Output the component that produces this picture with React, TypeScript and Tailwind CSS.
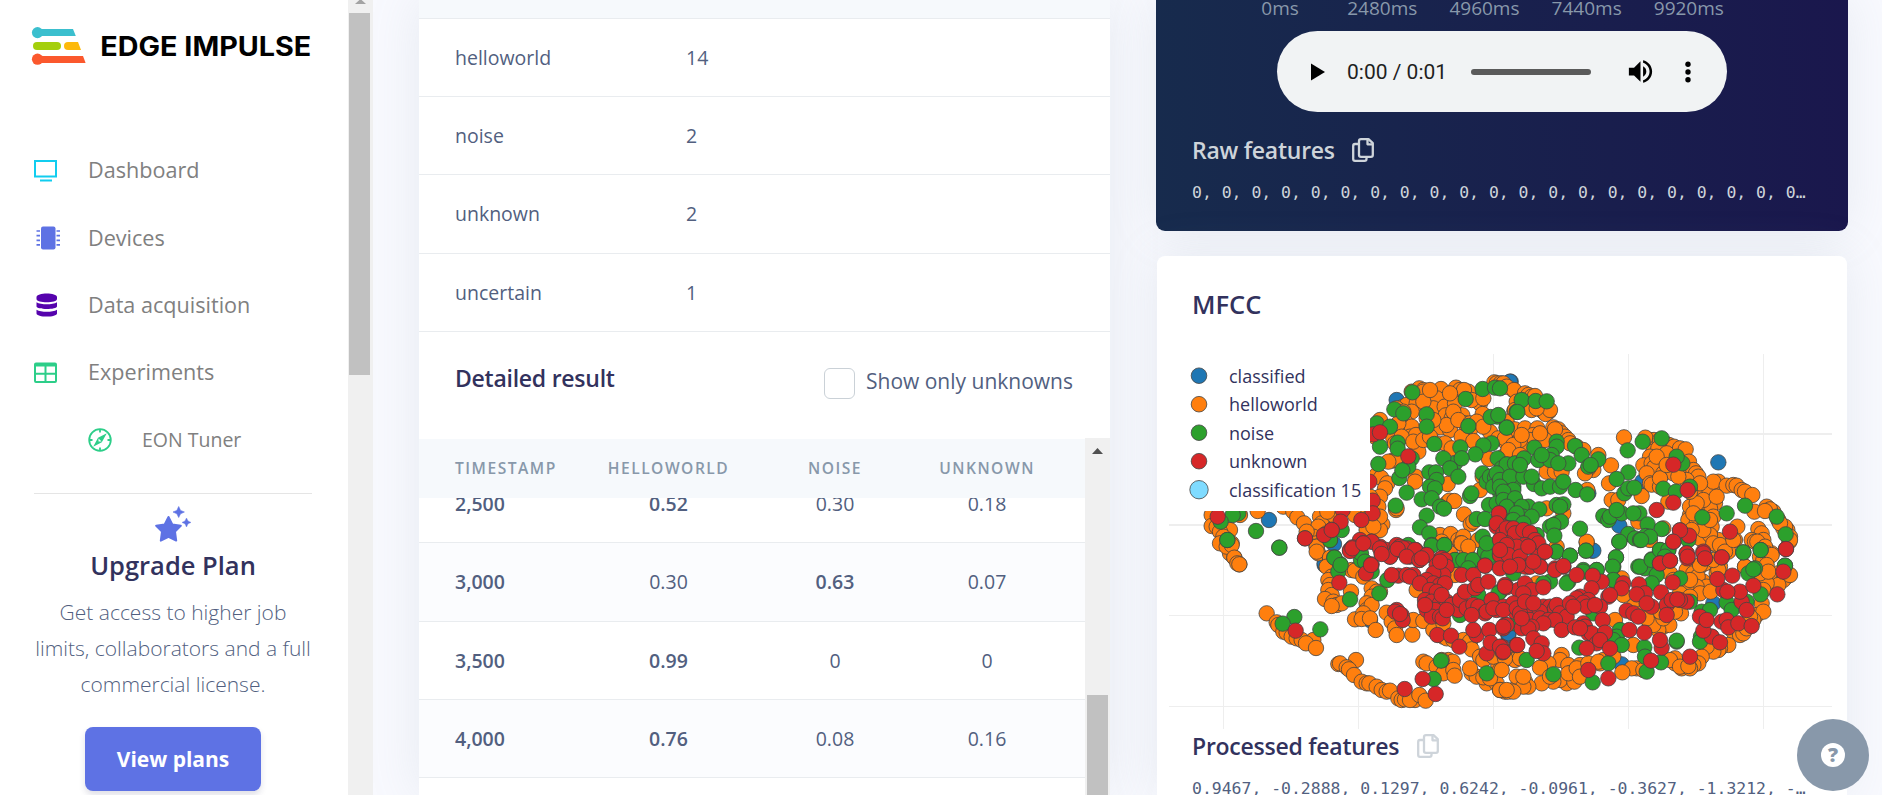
import React from "react";

type Trace = { color: string; tiles: string[] };

// Marker positions, grouped by trace. Each trace has four tiles (top-left,
// top-right, bottom-left, bottom-right) measured at three units per pixel.
const TILE_ORIGINS = [
  [1150, 340],
  [1500, 340],
  [1150, 540],
  [1500, 540],
];

const TRACES: Trace[] = [
  {
    color: "#1f77b4",
    tiles: [
      "357,540 740,180 1082,125 552,612 524,675",
      "30,125 655,367 427,425 358,557 275,632 265,460",
      "660,240 1075,285 524,70",
      "280,32 640,190 365,373 25,280",
    ],
  },
  {
    color: "#ff7f0e",
    tiles: [
      "785,155 808,145 820,150 830,170 873,147 918,143 930,150 955,155 942,150 760,200 770,195 800,190 785,215 860,175 850,205 884,200 915,190 887,226 937,226 905,235 990,190 998,222 1033,127 1040,130 1060,140 1052,130 1090,150 1093,213 740,205 690,240 765,245 770,265 785,260 780,290 798,285 850,260 873,262 900,270 890,255 960,270 1020,276 935,290 970,303 1080,280 1070,245 860,310 885,310 905,325 800,315 805,335 730,295 735,310 728,362 740,360 715,365 675,290 1017,357 1090,340 1060,350 1080,325 797,410 795,425 893,432 998,410 990,450 680,405 693,413 712,430 705,445 690,470 685,500 738,510 740,505 890,490 898,482 913,483 942,523 962,552 970,545 697,553 650,570 690,570 615,525 870,585 902,582 875,605 925,600 940,590 932,610 985,600 950,635 900,640 185,525 270,525 323,513 400,500 430,515 442,532 462,550 185,558 200,560 240,570 210,575 220,590 245,610 232,620 240,640 253,653 268,673 530,513 510,530 515,550 550,525 532,515 505,560 490,590 500,610 505,640 500,620 470,575 530,580 540,655 655,510 690,530 820,155 760,215 910,215 945,250 820,185 925,240 660,470 665,520 670,560 830,235 850,240 745,250 900,160 965,180 1000,175 960,250 980,245 1000,260 1045,295 755,290 790,305 820,300 840,290 840,150",
      "10,130 20,140 42,150 75,160 85,165 95,170 105,168 50,185 45,210 95,210 147,215 130,215 137,222 45,268 75,265 112,265 145,290 160,262 175,268 185,280 195,290 205,300 210,310 165,268 100,285 135,300 90,300 20,310 45,340 70,325 230,320 250,330 295,345 333,376 140,395 165,395 185,395 280,390 265,385 255,400 262,450 372,292 450,300 462,300 436,293 480,300 495,310 507,315 460,335 475,325 450,350 510,350 522,320 540,325 557,328 567,365 430,376 455,370 465,400 463,382 440,400 490,400 525,390 545,385 580,390 588,400 595,410 560,420 450,430 327,430 425,468 455,434 480,440 505,485 335,480 355,480 590,455 585,470 610,450 627,445 655,425 640,425 680,437 700,435 710,437 725,450 735,455 757,465 645,490 630,505 590,510 570,525 600,530 640,530 565,540 590,550 615,550 635,560 800,500 820,515 810,508 763,515 795,513 835,540 850,565 862,570 855,560 870,590 868,605 775,567 785,580 755,600 765,605 790,600 772,605 712,560 705,600 655,600 600,595 650,615 670,632 685,635 780,650 800,630 815,640 800,660 260,607 170,620 190,520 140,505 415,545 490,565 450,600 640,670 660,680 735,680 600,680 615,670 500,340 520,400 610,480 570,500 650,470 590,490 630,585 610,570 575,570 480,415 15,295 60,300 40,315 150,210 110,205 65,285 120,280 25,330 60,345 470,350 500,375 535,410 600,430 570,455 630,540 580,520 840,550 870,600",
      "210,10 230,20 245,15 253,53 262,70 268,73 500,20 500,35 540,53 530,80 545,110 535,120 540,135 535,150 545,165 525,177 550,185 560,195 575,190 545,198 605,90 615,92 640,110 603,155 665,145 690,155 680,155 665,170 650,190 650,210 665,195 615,238 640,220 635,237 660,235 677,270 710,218 725,245 735,265 740,285 787,284 790,240 820,243 350,220 380,247 385,255 400,275 410,278 425,290 440,295 455,300 490,300 468,310 498,324 565,372 570,370 618,360 590,382 597,388 612,405 635,425 650,430 658,430 680,440 695,450 710,455 720,452 745,475 755,480 765,478 795,480 780,480 808,465 827,482 820,365 830,370 860,380 880,400 895,360 908,365 875,360 910,390 914,407 850,270 870,285 880,290 890,295 880,250 910,300 940,300 960,305 965,328 965,400 980,410 960,385 990,350 1000,360 1045,375 1050,390 1010,430 1000,412 1040,430 1020,415 1065,455 1050,450 1090,450 1075,455 1100,410 1085,355 1100,355 900,100 915,105 935,10 955,20 800,150 1060,360 1030,350 860,200 870,215",
      "260,5 365,115 110,130 370,165 430,190 400,200 345,240 425,220 470,240 450,250 490,260 508,255 543,220 475,270 460,255 400,315 510,100 520,120 560,90 580,100 540,130 610,125 593,110 620,140 590,140 560,150 600,160 632,155 650,100 655,90 640,60 640,10 660,15 675,35 700,0 735,80 795,20 800,40 790,60 815,45 835,100 815,110 860,110 850,120 835,135 800,130 855,95 790,150 785,190 770,225 790,215 760,240 750,230 700,275 720,285 730,280 740,265 685,315 660,325 655,330 640,335 635,290 620,320 605,350 595,370 580,375 560,375 545,385 525,370 525,355 510,360 570,385 540,380 565,378 410,385 395,385 430,390 367,397 185,345 180,360 205,375 210,400 200,430 180,420 160,425 223,425 205,400 240,375 230,385 265,370 300,370 310,360 295,365 125,430 145,370 120,383 75,425 85,440 70,440 70,410 40,455 0,450 20,450 45,360 15,355 60,355 5,390 150,410 240,410 340,350 490,235 525,215 480,215 440,235 570,120 540,160 570,170 780,100 800,75 805,95 870,105 340,120 600,75",
    ],
  },
  {
    color: "#2ca02c",
    tiles: [
      "787,157 998,147 1035,143 947,177 733,208 760,220 830,223 680,250 720,260 830,260 1100,215 1042,230 1022,231 955,258 1070,262 743,308 743,326 690,320 853,312 931,322 1025,310 1000,316 976,343 685,372 785,355 775,380 748,414 757,391 915,370 935,355 880,355 900,385 925,410 1043,355 1055,385 1072,374 838,397 858,397 860,420 840,440 855,445 770,458 815,478 845,475 870,500 882,506 737,497 830,527 810,562 838,580 845,615 883,615 998,400 1010,425 1020,410 1035,413 960,468 964,460 1017,495 1070,478 1050,457 1090,410 1095,480 980,537 1005,537 998,590 1005,635 318,573 388,623 265,520 248,525 212,545 232,600 575,570 540,600 553,652 570,672 633,660 775,615 915,660 940,665 965,665 1000,650 1050,600 1080,520 1060,500 1090,510 1040,490 1070,440 1090,440 1030,440 1100,390",
      "65,180 107,183 140,184 52,216 20,263 103,323 170,305 170,320 225,318 245,345 295,358 265,380 272,375 20,373 45,370 72,355 115,360 155,345 150,360 205,370 175,370 -5,225 0,145 -10,400 0,420 30,410 70,410 102,432 125,445 150,440 180,440 190,425 227,450 262,463 0,440 40,450 10,455 10,480 45,475 35,510 85,500 65,500 118,508 70,530 95,530 20,500 50,520 170,495 190,493 180,500 40,540 70,550 150,560 170,550 183,545 160,555 163,587 110,585 240,566 168,635 210,647 258,632 383,331 428,305 485,295 385,397 350,417 373,460 385,445 403,443 547,370 530,350 490,446 528,455 570,440 735,497 680,520 607,532 830,530 310,528 325,540 330,530 365,520 350,510 418,520 400,520 443,553 485,567 358,605 385,582 405,595 420,600 437,588 450,590 565,600 348,652 340,680 415,680 480,630 505,630 455,658 857,583 730,637 782,630 855,677 765,685 290,690 250,690 95,410 125,345 60,375",
      "388,23 232,0 433,231 398,251 511,268 565,95 553,53 572,75 540,0 633,40 645,65 665,95 600,178 688,160 712,120 845,17 883,15 915,60 940,60 968,60 955,85 1005,35 1015,50 1050,80 1050,155 985,165 930,225 873,362 851,417 1010,400 1090,80 1010,10 1090,60",
      "168,35 210,47 258,32 348,52 338,80 250,95 290,90 205,125 200,130 150,125 130,130 340,120 435,85 420,80 455,60 480,30 505,30 470,105 455,130 495,50 540,115 358,5 423,0 730,37 782,30 745,100 760,88 855,77 782,163 680,187 740,185 695,210 605,215 630,210 530,305 530,302 603,290 600,305 570,185 360,270 350,290 340,300 365,315 433,322 435,350 440,395 483,367 325,370 238,323 80,360 160,403 278,427 45,250 280,220 -5,160 50,30 40,100",
    ],
  },
  {
    color: "#d62728",
    tiles: [
      "670,283 690,277 775,349 658,425 668,482 668,520 578,510 572,545 545,570 522,585 545,570 634,540 465,595 203,530 630,600 640,610 665,605 600,630 607,622 1048,521 1040,560 1060,560 1075,565 1090,575 1062,580 690,620 710,630 740,615 750,620 770,625 797,630 745,630 695,640 720,650 780,650 825,645 808,660 870,660 875,655 665,673 1005,677 1050,645 1070,617 1100,640 1085,650",
      "520,374 563,450 520,488 470,510 540,571 520,605 567,587 540,571 690,575 858,627 610,635 560,640 615,655 562,655 665,652 480,670 510,662 -3,520 -10,550 10,580 20,565 40,565 45,580 70,570 90,578 105,600 115,610 75,615 85,620 20,610 0,600 25,645 0,640 135,635 115,650 60,660 190,680 165,685 120,680 85,680",
      "465,-5 568,128 437,272 600,33 607,25 648,100 663,75 665,5 640,10 690,25 720,50 695,42 760,25 795,30 743,27 770,50 830,45 808,60 815,55 875,55 885,60 860,75 870,90 890,80 880,105 850,100 745,107 725,105 770,105 790,105 780,110 830,120 850,130 870,135 885,130 810,130 840,150 860,155 825,180 845,185 870,190 890,185 875,165 830,210 855,210 845,230 870,230 878,235 905,195 925,210 930,180 945,155 935,105 970,105 975,145 985,135 1015,125 1005,77 1065,135 1070,142 950,205 970,195 985,200 1025,180 1005,220 1010,215 965,225 1040,210 1060,200 1100,205 740,210 735,215 755,225 758,240 750,222 862,285 903,287 928,320 980,285 970,270 1018,270 1065,255 1060,265 1010,340 1022,308 1055,320 1058,337 1100,315 818,417 764,447 857,462 1050,45 1080,50 1075,80 1070,20 1100,20 1030,205 1095,215 1105,150 870,65 825,195 890,210",
      "20,15 25,45 0,30 60,50 75,80 90,80 55,75 115,50 85,20 120,80 165,90 190,78 135,35 100,65 0,85 30,80 230,105 305,125 278,107 275,145 370,130 365,145 325,170 330,165 417,133 435,160 410,163 518,127 483,157 500,195 515,180 560,185 540,180 532,178 455,200 500,225 380,212 400,220 415,230 388,270 433,278 485,323 480,300 453,362 570,350 635,290 660,307 610,272 600,230 620,240 665,245 680,240 685,262 715,250 755,258 725,185 740,210 720,155 670,150 682,155 760,137 697,107 652,117 665,52 610,40 560,40 615,55 563,50 480,70 510,62 850,95 832,163 858,27 520,5 75,130 95,150 70,160 130,142 15,140 40,190 10,210 50,205 130,200 100,205 150,200 120,215 165,205 170,195 180,220 200,230 240,170 230,175 210,190 265,180 250,188 300,200 260,200 285,195 220,200 60,220 90,240 120,235 145,240 165,240 130,250 95,260 65,265 85,265 185,270 250,250 225,262 255,260 308,240 265,280 275,280 315,278 20,255 10,260 100,295 125,310 130,340 110,333 52,315 290,310 300,300 260,325 330,325 325,415 265,390 0,320 10,335 75,185 440,190 100,190 65,235 240,265",
    ],
  },
];

const LEGEND = [
  { label: "classified", color: "#1f77b4", r: 7.8 },
  { label: "helloworld", color: "#ff7f0e", r: 7.8 },
  { label: "noise", color: "#2ca02c", r: 7.8 },
  { label: "unknown", color: "#d62728", r: 7.8 },
  { label: "classification 15", color: "#7fdbff", r: 9.2 },
];

function Scatter() {
  return (
    <svg className="block h-[376px] w-[664px]" viewBox="1169 354 664 376">
      <g stroke="#eeeeee">
        {[1223.5, 1358.5, 1493.5, 1628.5, 1763.5].map((x) => (
          <path key={x} d={`M${x} 354V729`} />
        ))}
        <path d="M1169 434H1832M1169 525H1832" strokeWidth="2" />
        <path d="M1169 615.5H1832M1169 706.5H1832" />
      </g>
      {TRACES.map((trace) => (
        <g key={trace.color} fill={trace.color} stroke="#444444" strokeWidth="0.8">
          {trace.tiles.map((tile, t) =>
            tile.split(" ").map((pair, i) => {
              const [x, y] = pair.split(",").map(Number);
              const [ox, oy] = TILE_ORIGINS[t];
              return <circle key={`${t}-${i}`} cx={ox + x / 3} cy={oy + y / 3} r="7.7" />;
            }),
          )}
        </g>
      ))}
      <rect x="1169" y="354" width="201" height="157" fill="#ffffff" />
      {LEGEND.map((item, i) => (
        <g key={item.label}>
          <circle cx="1199" cy={375.7 + i * 28.5} r={item.r} fill={item.color} stroke="#444444" strokeWidth="0.8" />
          <text x="1229" y={382.8 + i * 28.5} className="fill-[#32325d] font-['Open_Sans',sans-serif] text-[18px]">
            {item.label}
          </text>
        </g>
      ))}
    </svg>
  );
}

function Logo() {
  return (
    <svg className="block h-[40px] w-[290px]" viewBox="30 26 290 40">
      <g fill="#3bbfce">
        <circle cx="37.5" cy="32.6" r="5.6" />
        <path d="M37 29H73L75.8 36H37Z" />
      </g>
      <rect x="33" y="42" width="28" height="8" rx="4" fill="#a4cf0c" />
      <path d="M68 42H78L81 50H68A4 4 0 0 1 68 42Z" fill="#fdb90b" />
      <g fill="#fb582d">
        <circle cx="37.5" cy="59.2" r="5.6" />
        <path d="M37 56H83L85.6 63H37Z" />
      </g>
      <text
        x="100.3"
        y="55.8"
        textLength="211"
        lengthAdjust="spacingAndGlyphs"
        className="fill-black font-['Inter',sans-serif] text-[26.5px] font-bold"
      >
        EDGE IMPULSE
      </text>
    </svg>
  );
}

const icon = "block h-6 w-6 shrink-0 overflow-visible";

function DashboardIcon() {
  return (
    <svg className={icon} viewBox="0 0 24 24" fill="none" stroke="#11cdef" strokeWidth="2">
      <rect x="1" y="2" width="21" height="15.5" />
      <path d="M6 21.5H18" />
    </svg>
  );
}

function DevicesIcon() {
  return (
    <svg className={icon} viewBox="0 0 24 24" fill="#5e72e4">
      <rect x="7" y="0.5" width="14.5" height="23" rx="2" />
      <path
        d="M6 5H2.5M6 9.7H2.5M6 14.3H2.5M6 18.8H2.5M22.5 5H26M22.5 9.7H26M22.5 14.3H26M22.5 18.8H26"
        stroke="#5e72e4"
        strokeWidth="1.7"
      />
    </svg>
  );
}

function DatabaseIcon() {
  return (
    <svg className={icon} viewBox="0 0 24 24" fill="#5603ad">
      <path d="M2.5 4C2.5 -0.7 23 -0.7 23 4V6C23 10.3 2.5 10.3 2.5 6Z" />
      <path d="M2.5 9.2C7 12 18.5 12 23 9.2V13.3C23 17 2.5 17 2.5 13.3Z" />
      <path d="M2.5 16.8C7 19.5 18.5 19.5 23 16.8V20.5C23 24.6 2.5 24.6 2.5 20.5Z" />
    </svg>
  );
}

function ExperimentsIcon() {
  return (
    <svg className={icon} viewBox="0 0 24 24" fill="none" stroke="#2dce89">
      <rect x="1" y="2.5" width="21" height="18.5" rx="1" strokeWidth="2" />
      <path d="M1 4H22" strokeWidth="3" />
      <path d="M1 12.7H22M11.5 4V21" strokeWidth="2" />
    </svg>
  );
}

function CompassIcon() {
  return (
    <svg className={icon} viewBox="0 0 24 24" fill="none" stroke="#2dce89">
      <circle cx="12" cy="12" r="10.8" strokeWidth="1.8" />
      <path d="M12 1V4.5M12 19.5V23M1 12H4.5M19.5 12H23" strokeWidth="1.8" />
      <path fillRule="evenodd" d="M18.8 5.2L13.8 14.2L5.2 18.8L10 9.8ZM10.5 10.6V13.6H13.6Z" fill="#2dce89" stroke="none" />
    </svg>
  );
}

function StarIcon() {
  return (
    <svg className="block h-9 w-9" viewBox="0 0 36 36" fill="#5e72e4" stroke="#5e72e4" strokeLinejoin="round">
      <path d="M13.5 11L17.3 18.4L25.8 19.8L20 25.6L21.2 34.6L13.5 30.9L5.8 34.6L7 25.6L1.2 19.8L9.7 18.4Z" strokeWidth="2" />
      <path d="M23.7 0.5L25.5 4.4L29.4 6L25.5 7.8L23.7 11.5L21.9 7.8L18 6L21.9 4.4Z" strokeWidth="0.6" />
      <path d="M31.5 12L33 15L36 16.4L33 17.8L31.5 21L30 17.8L27 16.4L30 15Z" strokeWidth="0.4" />
    </svg>
  );
}

function CopyIcon({ className }: { className: string }) {
  return (
    <svg className={`block h-[24px] w-[22px] ${className}`} viewBox="0 0 22 24" fill="none" stroke="currentColor" strokeWidth="2.3" strokeLinejoin="round">
      <path d="M6 6H3Q1.2 6 1.2 8V21Q1.2 22.8 3 22.8H12.5Q14.5 22.8 14.5 21V19" />
      <path d="M9 1.2H16.5L20.8 5.2V17Q20.8 18.8 19 18.8H9Q7 18.8 7 17V3Q7 1.2 9 1.2Z" />
      <path d="M15.5 1V6.3H21" />
    </svg>
  );
}

const NAV = [
  { label: "Dashboard", Icon: DashboardIcon },
  { label: "Devices", Icon: DevicesIcon },
  { label: "Data acquisition", Icon: DatabaseIcon },
  { label: "Experiments", Icon: ExperimentsIcon },
];

function Sidebar() {
  return (
    <aside className="flex h-full w-[373px] shrink-0 bg-white">
      <div className="flex w-[348px] flex-col">
        <div className="pt-[26px] pl-[30px]">
          <Logo />
        </div>
        <nav className="pt-[71px]">
          {NAV.map(({ label, Icon }) => (
            <div key={label} className="flex h-[67.3px] items-center pl-[34px] text-[21.6px] text-[#808080]">
              <Icon />
              <span className="ml-[30px]">{label}</span>
            </div>
          ))}
          <div className="flex h-[67.3px] items-center pl-[88px] text-[19.5px] text-[#808080]">
            <CompassIcon />
            <span className="ml-[30px]">EON Tuner</span>
          </div>
        </nav>
        <div className="mx-[34px] mt-[20px] flex w-[278px] flex-col items-center border-t border-[#e5e5e5] pt-[12px]">
          <StarIcon />
          <div className="mt-[4px] text-[25.5px] leading-[38px] font-semibold text-[#32325d]">Upgrade Plan</div>
          <p className="mt-[11px] text-center text-[21px] leading-[35.6px] font-light whitespace-nowrap text-[#525f7f]">
            Get access to higher job
            <br />
            limits, collaborators and a full
            <br />
            commercial license.
          </p>
          <button className="mt-[25px] h-[64px] w-[176px] shrink-0 rounded-[8px] bg-[#5e72e4] text-[21px] font-bold text-white shadow-[0_4px_6px_rgba(50,50,93,0.15)]">
            View plans
          </button>
        </div>
      </div>
      <div className="flex w-[25px] flex-col items-center bg-[#f0f0f0]">
        <svg className="block h-[13px] w-[11px]" viewBox="0 0 11 13" fill="#a3a3a3">
          <path d="M0 4H11L5.5 -1Z" />
        </svg>
        <div className="mr-[2px] h-[362px] w-[21px] bg-[#c1c1c1]" />
      </div>
    </aside>
  );
}

const SUMMARY = [
  ["helloworld", "14"],
  ["noise", "2"],
  ["unknown", "2"],
  ["uncertain", "1"],
];

const DETAILS = [
  { cells: ["2,500", "0.52", "0.30", "0.18"], best: 1, row: "bg-white" },
  { cells: ["3,000", "0.30", "0.63", "0.07"], best: 2, row: "bg-[#fbfcfe]" },
  { cells: ["3,500", "0.99", "0", "0"], best: 1, row: "bg-white" },
  { cells: ["4,000", "0.76", "0.08", "0.16"], best: 1, row: "bg-[#fbfcfe]" },
  { cells: ["", "", "", ""], best: 0, row: "bg-white" },
];

const columns = "grid grid-cols-[153px_193px_140px_164px_16px] items-center";

function ResultCard() {
  return (
    <section className="flex h-full w-[691px] shrink-0 flex-col bg-white text-[19.5px] text-[#525f7f] shadow-[0_0_48px_rgba(136,152,170,0.15)]">
      <div className="h-[18px] shrink-0 bg-[#f6f9fc]" />
      {SUMMARY.map(([label, count]) => (
        <div key={label} className="flex h-[78.2px] shrink-0 items-center border-t border-[#e9ecef] pl-[36px]">
          <span className="w-[231px]">{label}</span>
          <span>{count}</span>
        </div>
      ))}
      <div className="flex h-[108.2px] shrink-0 items-start border-t border-[#e9ecef] pr-[37px] pl-[36px]">
        <h3 className="mt-[28px] text-[23px] leading-[36px] font-semibold tracking-[-0.25px] text-[#32325d]">Detailed result</h3>
        <div className="mt-[36px] ml-auto h-[31px] w-[31px] rounded-[6px] border border-[#cad1d7]" />
        <span className="mt-[33px] ml-[11px] text-[21px] leading-[32px]">Show only unknowns</span>
      </div>
      <div className="flex min-h-0 flex-1">
        <div className="flex w-[666px] flex-col overflow-hidden">
          <div className={`${columns} z-10 h-[59px] shrink-0 bg-[#f6f9fc] text-[15.6px] font-semibold tracking-[1.5px] text-[#8898aa]`}>
            <span className="pl-[36px]">TIMESTAMP</span>
            <span className="text-center">HELLOWORLD</span>
            <span className="text-center">NOISE</span>
            <span className="text-center">UNKNOWN</span>
          </div>
          <div className="-mt-[34px]">
            {DETAILS.map(({ cells, best, row }) => (
              <div key={cells[0]} className={`${columns} h-[78.3px] border-t border-[#e9ecef] ${row}`}>
                {cells.map((cell, c) => (
                  <span
                    key={c}
                    className={c === 0 ? "pl-[36px] font-semibold" : c === best ? "text-center font-semibold" : "text-center"}
                  >
                    {cell}
                  </span>
                ))}
              </div>
            ))}
          </div>
        </div>
        <div className="-mt-px flex w-[25px] flex-col items-center bg-[#f0f0f0]">
          <svg className="mt-[10px] block h-[6px] w-[11px] shrink-0" viewBox="0 0 11 6" fill="#505050">
            <path d="M0 6H11L5.5 0Z" />
          </svg>
          <div className="mt-[241px] w-[21px] flex-1 bg-[#c1c1c1]" />
        </div>
      </div>
    </section>
  );
}

function AudioPlayer() {
  return (
    <div className="ml-[121px] flex h-[81px] w-[450px] items-center rounded-full bg-[#f1f3f4] pl-[34px]">
      <svg className="block h-[18px] w-[14px]" viewBox="0 0 14 18">
        <path d="M0 0.5L14 9L0 17.5Z" />
      </svg>
      <span className="mt-[2px] ml-[22px] w-[98px] font-['Roboto',sans-serif] text-[21px] whitespace-nowrap text-[#1f1f1f]">0:00 / 0:01</span>
      <div className="ml-[26px] h-[6px] w-[120px] rounded-full bg-[#5a5a5a]" />
      <svg className="ml-[34px] block h-[31px] w-[31px]" viewBox="0 0 24 24">
        <path d="M3 9v6h4l5 5V4L7 9H3zm13.5 3c0-1.77-1.02-3.29-2.5-4.03v8.05c1.48-.73 2.5-2.25 2.5-4.02zM14 3.23v2.06c2.89.86 5 3.54 5 6.71s-2.11 5.85-5 6.71v2.06c4.01-.91 7-4.49 7-8.77s-2.99-7.86-7-8.77z" />
      </svg>
      <svg className="ml-[28px] block h-[22px] w-[8px]" viewBox="0 0 8 22">
        <circle cx="4" cy="3.3" r="2.7" />
        <circle cx="4" cy="11" r="2.7" />
        <circle cx="4" cy="18.7" r="2.7" />
      </svg>
    </div>
  );
}

const mono = "font-['DejaVu_Sans_Mono','Liberation_Mono',monospace] text-[16.44px] leading-[26px] whitespace-nowrap";

function RightColumn() {
  return (
    <div className="ml-[46px] flex h-full w-[692px] shrink-0 flex-col">
      <section className="h-[231px] shrink-0 rounded-b-[9px] bg-[linear-gradient(87deg,#172b4d_0%,#1a174d_100%)] shadow-[0_0_48px_rgba(136,152,170,0.15)]">
        <div className="ml-[73px] grid h-[31px] grid-cols-[102.2px_102.2px_102.2px_102.2px_102.2px] text-center text-[19px] leading-[17px] text-[#8898aa]">
          <span>0ms</span>
          <span>2480ms</span>
          <span>4960ms</span>
          <span>7440ms</span>
          <span>9920ms</span>
        </div>
        <AudioPlayer />
        <div className="mt-[21px] ml-[36px] flex h-[34px] items-center text-[23px] font-semibold text-[#ced4da]">
          <span className="tracking-[-0.25px]">Raw features</span>
          <CopyIcon className="ml-[17px]" />
        </div>
        <div className={`${mono} mt-[13px] ml-[36px] text-[#ced4da]`}>
          0, 0, 0, 0, 0, 0, 0, 0, 0, 0, 0, 0, 0, 0, 0, 0, 0, 0, 0, 0, 0…
        </div>
      </section>
      <section className="mt-[25px] ml-px h-[539px] w-[690px] shrink-0 overflow-hidden rounded-t-[8px] bg-white shadow-[0_0_48px_rgba(136,152,170,0.15)]">
        <h2 className="mt-[29px] ml-[35px] h-[69px] text-[25.5px] leading-[38px] font-semibold text-[#32325d]">MFCC</h2>
        <div className="ml-[12px]">
          <Scatter />
        </div>
        <div className="-mt-px ml-[35px] flex h-[34px] items-center text-[23px] font-semibold text-[#32325d]">
          <span className="tracking-[-0.25px]">Processed features</span>
          <CopyIcon className="ml-[18px] text-[#ced4da]" />
        </div>
        <div className={`${mono} mt-[13px] ml-[35px] text-[#525f7f]`}>
          0.9467, -0.2888, 0.1297, 0.6242, -0.0961, -0.3627, -1.3212, -…
        </div>
      </section>
    </div>
  );
}

export default function App() {
  return (
    <div className="relative flex h-[795px] w-[1882px] overflow-hidden bg-[#f8f9fe] font-['Open_Sans',sans-serif]">
      <Sidebar />
      <main className="flex min-w-0 flex-1 overflow-hidden pl-[46px]">
        <ResultCard />
        <RightColumn />
      </main>
      <button className="absolute top-[719px] left-[1797px] flex h-[72px] w-[72px] items-center justify-center rounded-full bg-[#8898aa]">
        <span className="flex h-6 w-6 items-center justify-center rounded-full bg-white text-[20px] leading-none font-extrabold text-[#8898aa]">
          ?
        </span>
      </button>
    </div>
  );
}
